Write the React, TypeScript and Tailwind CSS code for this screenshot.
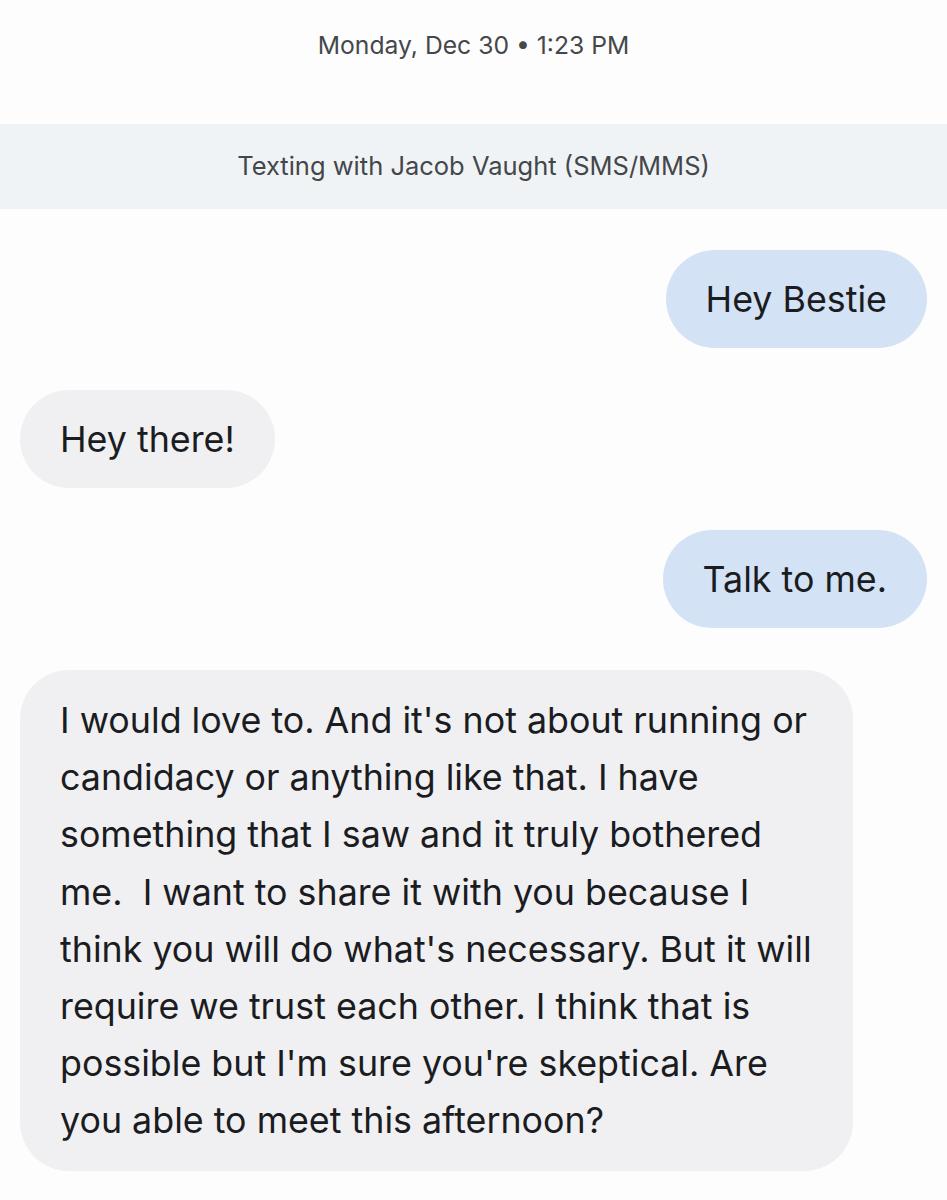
const longLines = [
  "I would love to. And it's not about running or",
  "candidacy or anything like that. I have",
  "something that I saw and it truly bothered",
  "me.\u00a0 I want to share it with you because I",
  "think you will do what's necessary. But it will",
  "require we trust each other. I think that is",
  "possible but I'm sure you're skeptical. Are",
  "you able to meet this afternoon?",
];

const messages = [
  { me: true, lines: ["Hey Bestie"] },
  { me: false, lines: ["Hey there!"] },
  { me: true, lines: ["Talk to me."] },
  { me: false, lines: longLines },
];

const Bubble = ({ me, lines }: { me: boolean; lines: string[] }) => (
  <div className={`flex ${me ? "justify-end" : "justify-start"}`}>
    <div
      className={`rounded-[49px] px-[40px] text-[35.8px] leading-[57.1px] text-[#1b1c1f] ${
        me ? "bg-[#d3e3f5]" : "bg-[#f0f0f2]"
      } ${lines.length > 1 ? "w-[833px] py-[22px]" : "py-[20.5px]"}`}
    >
      {lines.map((l, i) => (
        <div key={i} className="whitespace-nowrap">
          {l}
        </div>
      ))}
    </div>
  </div>
);

export default function App() {
  return (
    <div className="min-h-[1200px] w-[947px] bg-[#fdfdfd] font-['Inter',sans-serif]">
      <div className="pt-[28px] text-center text-[24.7px] leading-[34px] text-[#45474a]">
        Monday, Dec 30 • 1:23 PM
      </div>
      <div className="mt-[62px] flex h-[85px] items-center justify-center bg-[#f0f3f6] text-[25.5px] text-[#44474a]">
        Texting with Jacob Vaught (SMS/MMS)
      </div>
      <div className="flex flex-col gap-[42px] px-[20px] pt-[41px]">
        {messages.map((m, i) => (
          <Bubble key={i} me={m.me} lines={m.lines} />
        ))}
      </div>
    </div>
  );
}
